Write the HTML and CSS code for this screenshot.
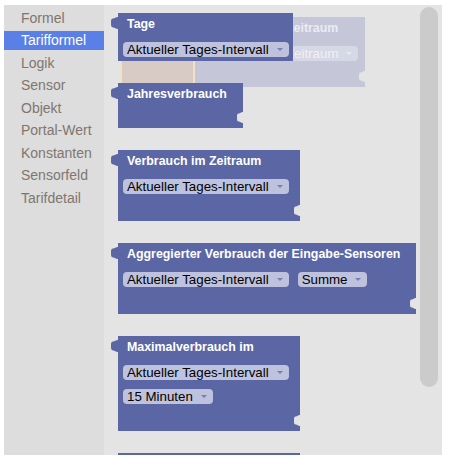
FILE: index.html
```html
<!DOCTYPE html>
<html lang="de">
<head>
<meta charset="utf-8">
<title>Tarifformel</title>
<link rel="stylesheet" href="styles.css">
</head>
<body>
<div class="app">
  <nav class="toolbox">
    <div class="cat">Formel</div>
    <div class="cat cat--selected">Tarifformel</div>
    <div class="cat">Logik</div>
    <div class="cat">Sensor</div>
    <div class="cat">Objekt</div>
    <div class="cat">Portal-Wert</div>
    <div class="cat">Konstanten</div>
    <div class="cat">Sensorfeld</div>
    <div class="cat">Tarifdetail</div>
  </nav>
  <div class="flyout">
    <div class="ghost">
      <div class="ghost-beige"></div>
      <div class="ghost-block">
        <div class="title ghost-title">Zeitraum</div>
        <div class="row"><span class="dd ghost-dd">Zeitraum<i class="arrow ghost-arrow"></i></span></div>
        <svg class="notch" viewBox="0 0 8 15" preserveAspectRatio="none"><path d="M8,0 C5,0 4.5,2 2.5,2 C0,2 0,4 0,7.5 C0,11 0,13 2.5,13 C4.5,13 5,15 8,15 Z" fill="#e4e4e4"/></svg>
      </div>
    </div>
    <div class="blocks">
      <div class="block block--tage">
        <svg class="tab" viewBox="0 0 8 15" preserveAspectRatio="none"><path d="M8,0 C5,0 4.5,2 2.5,2 C0,2 0,4 0,7.5 C0,11 0,13 2.5,13 C4.5,13 5,15 8,15 Z" fill="#5b67a5"/></svg>
        <div class="title">Tage</div>
        <div class="row"><span class="dd">Aktueller Tages-Intervall<i class="arrow"></i></span></div>
      </div>
      <div class="block block--jahr">
        <svg class="tab" viewBox="0 0 8 15" preserveAspectRatio="none"><path d="M8,0 C5,0 4.5,2 2.5,2 C0,2 0,4 0,7.5 C0,11 0,13 2.5,13 C4.5,13 5,15 8,15 Z" fill="#5b67a5"/></svg>
        <div class="title">Jahresverbrauch</div>
        <svg class="notch" viewBox="0 0 8 15" preserveAspectRatio="none"><path d="M8,0 C5,0 4.5,2 2.5,2 C0,2 0,4 0,7.5 C0,11 0,13 2.5,13 C4.5,13 5,15 8,15 Z" fill="#e4e4e4"/></svg>
      </div>
      <div class="block block--zeitraum">
        <svg class="tab" viewBox="0 0 8 15" preserveAspectRatio="none"><path d="M8,0 C5,0 4.5,2 2.5,2 C0,2 0,4 0,7.5 C0,11 0,13 2.5,13 C4.5,13 5,15 8,15 Z" fill="#5b67a5"/></svg>
        <div class="title">Verbrauch im Zeitraum</div>
        <div class="row"><span class="dd">Aktueller Tages-Intervall<i class="arrow"></i></span></div>
        <svg class="notch" viewBox="0 0 8 15" preserveAspectRatio="none"><path d="M8,0 C5,0 4.5,2 2.5,2 C0,2 0,4 0,7.5 C0,11 0,13 2.5,13 C4.5,13 5,15 8,15 Z" fill="#e4e4e4"/></svg>
      </div>
      <div class="block block--aggr">
        <svg class="tab" viewBox="0 0 8 15" preserveAspectRatio="none"><path d="M8,0 C5,0 4.5,2 2.5,2 C0,2 0,4 0,7.5 C0,11 0,13 2.5,13 C4.5,13 5,15 8,15 Z" fill="#5b67a5"/></svg>
        <div class="title">Aggregierter Verbrauch der Eingabe-Sensoren</div>
        <div class="row"><span class="dd">Aktueller Tages-Intervall<i class="arrow"></i></span><span class="dd">Summe<i class="arrow"></i></span></div>
        <svg class="notch" viewBox="0 0 8 15" preserveAspectRatio="none"><path d="M8,0 C5,0 4.5,2 2.5,2 C0,2 0,4 0,7.5 C0,11 0,13 2.5,13 C4.5,13 5,15 8,15 Z" fill="#e4e4e4"/></svg>
      </div>
      <div class="block block--max">
        <svg class="tab" viewBox="0 0 8 15" preserveAspectRatio="none"><path d="M8,0 C5,0 4.5,2 2.5,2 C0,2 0,4 0,7.5 C0,11 0,13 2.5,13 C4.5,13 5,15 8,15 Z" fill="#5b67a5"/></svg>
        <div class="title">Maximalverbrauch im</div>
        <div class="row"><span class="dd">Aktueller Tages-Intervall<i class="arrow"></i></span></div>
        <div class="row row--next"><span class="dd">15 Minuten<i class="arrow"></i></span></div>
        <svg class="notch" viewBox="0 0 8 15" preserveAspectRatio="none"><path d="M8,0 C5,0 4.5,2 2.5,2 C0,2 0,4 0,7.5 C0,11 0,13 2.5,13 C4.5,13 5,15 8,15 Z" fill="#e4e4e4"/></svg>
      </div>
      <div class="block block--next"></div>
    </div>
    <div class="scrollbar"></div>
  </div>
</div>
</body>
</html>
```
FILE: styles.css
```css
html, body {
  margin: 0;
  padding: 0;
  background: #ffffff;
}

.app {
  margin: 5px 0 0 4px;
  width: 438px;
  height: 450px;
  display: flex;
  font-family: "Liberation Sans", Arial, sans-serif;
}

.toolbox {
  width: 100px;
  flex: none;
  background: #dddddd;
  padding-top: 3.5px;
  box-sizing: border-box;
}

.cat {
  height: 19px;
  line-height: 19px;
  margin-bottom: 3.5px;
  padding-left: 17px;
  font-size: 14px;
  color: #80766f;
  white-space: nowrap;
}

.cat--selected {
  background: #5a7fe6;
  color: #ffffff;
}

.flyout {
  flex: 1;
  position: relative;
  overflow: hidden;
  background: #e4e4e4;
}

.blocks {
  display: flex;
  flex-direction: column;
  align-items: flex-start;
  gap: 22px;
  padding: 8px 0 0 14px;
}

.block {
  position: relative;
  z-index: 1;
  box-sizing: border-box;
  background: #5b67a5;
  padding: 4px 0 0 5px;
  flex: none;
}

.block--tage { width: 175px; height: 48px; }
.block--jahr { width: 125px; height: 45px; }
.block--zeitraum { width: 182px; height: 71px; }
.block--aggr { width: 298px; height: 71px; }
.block--max { width: 182px; height: 95px; }
.block--next { width: 182px; height: 71px; }

.title {
  padding-left: 4px;
  height: 15px;
  line-height: 15px;
  font-size: 12.4px;
  font-weight: bold;
  color: #ffffff;
  white-space: nowrap;
}

.row {
  display: flex;
  gap: 9px;
  margin-top: 10px;
}

.row--next {
  margin-top: 9px;
}

.dd {
  display: inline-flex;
  align-items: center;
  gap: 8px;
  height: 15px;
  padding: 0 6px 0 4px;
  border-radius: 4px;
  background: #bec2dc;
  color: #000000;
  font-size: 13.3px;
  line-height: 15px;
  white-space: nowrap;
}

.arrow {
  width: 0;
  height: 0;
  border-left: 3px solid transparent;
  border-right: 3px solid transparent;
  border-top: 3px solid #7780b5;
}

.tab {
  position: absolute;
  left: -7px;
  top: 4px;
  width: 7px;
  height: 12px;
  overflow: visible;
}

.notch {
  position: absolute;
  right: 0;
  bottom: 5px;
  width: 6px;
  height: 11px;
  overflow: visible;
}

/* faded drag image behind the first block */
.ghost {
  position: absolute;
  left: 16px;
  top: 12px;
  z-index: 0;
  display: flex;
}

.ghost-beige {
  width: 71px;
  height: 70px;
  background: #d8cac4;
  border-left: 2px solid #efe2c8;
  border-right: 2px solid #efe2c8;
}

.ghost-block {
  position: relative;
  box-sizing: border-box;
  width: 170px;
  height: 70px;
  background: #c5c7d9;
  padding: 4px 0 0 5px;
}

.ghost-title {
  padding-left: 86px;
  color: #ebebf2;
}

.ghost-dd {
  padding-left: 86px;
  background: #d6d8e5;
  color: #f1f1f5;
}

.ghost-arrow {
  border-top-color: #e6e7ef;
}

.scrollbar {
  position: absolute;
  top: 2px;
  right: 4px;
  width: 18px;
  height: 380px;
  border-radius: 9px;
  background: #cbcbcb;
  z-index: 2;
}
```
